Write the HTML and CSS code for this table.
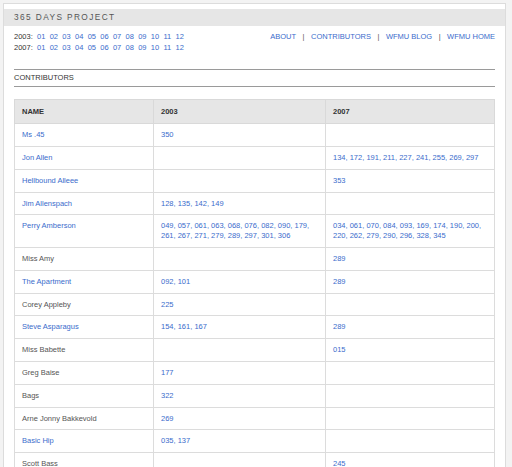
FILE: index.html
```html
<!DOCTYPE html>
<html>
<head>
<meta charset="utf-8">
<title>365 Days Project - Contributors</title>
<link rel="stylesheet" href="styles.css">
</head>
<body>
<div class="panel">
  <div class="titlebar">365 DAYS PROJECT</div>
  <div class="content">
    <div class="topnav">
      <div class="years">
        <div class="yearline">2003: <a href="#">01</a> <a href="#">02</a> <a href="#">03</a> <a href="#">04</a> <a href="#">05</a> <a href="#">06</a> <a href="#">07</a> <a href="#">08</a> <a href="#">09</a> <a href="#">10</a> <a href="#">11</a> <a href="#">12</a></div>
        <div class="yearline">2007: <a href="#">01</a> <a href="#">02</a> <a href="#">03</a> <a href="#">04</a> <a href="#">05</a> <a href="#">06</a> <a href="#">07</a> <a href="#">08</a> <a href="#">09</a> <a href="#">10</a> <a href="#">11</a> <a href="#">12</a></div>
      </div>
      <div class="menu"><a href="#">ABOUT</a><span class="sep">|</span><a href="#">CONTRIBUTORS</a><span class="sep">|</span><a href="#">WFMU BLOG</a><span class="sep">|</span><a href="#">WFMU HOME</a></div>
    </div>
    <div class="section">CONTRIBUTORS</div>
    <table class="contrib">
      <colgroup><col class="c1"><col class="c2"><col class="c3"></colgroup>
      <thead>
        <tr><th>NAME</th><th>2003</th><th>2007</th></tr>
      </thead>
      <tbody>
        <tr><td><a href="#">Ms .45</a></td><td class="nums"><a href="#">350</a></td><td class="nums"></td></tr>
        <tr><td><a href="#">Jon Allen</a></td><td class="nums"></td><td class="nums"><a href="#">134</a>, <a href="#">172</a>, <a href="#">191</a>, <a href="#">211</a>, <a href="#">227</a>, <a href="#">241</a>, <a href="#">255</a>, <a href="#">269</a>, <a href="#">297</a></td></tr>
        <tr><td><a href="#">Hellbound Alleee</a></td><td class="nums"></td><td class="nums"><a href="#">353</a></td></tr>
        <tr><td><a href="#">Jim Allenspach</a></td><td class="nums"><a href="#">128</a>, <a href="#">135</a>, <a href="#">142</a>, <a href="#">149</a></td><td class="nums"></td></tr>
        <tr><td><a href="#">Perry Amberson</a></td><td class="nums"><a href="#">049</a>, <a href="#">057</a>, <a href="#">061</a>, <a href="#">063</a>, <a href="#">068</a>, <a href="#">076</a>, <a href="#">082</a>, <a href="#">090</a>, <a href="#">179</a>, <a href="#">261</a>, <a href="#">267</a>, <a href="#">271</a>, <a href="#">279</a>, <a href="#">289</a>, <a href="#">297</a>, <a href="#">301</a>, <a href="#">306</a></td><td class="nums"><a href="#">034</a>, <a href="#">061</a>, <a href="#">070</a>, <a href="#">084</a>, <a href="#">093</a>, <a href="#">169</a>, <a href="#">174</a>, <a href="#">190</a>, <a href="#">200</a>, <a href="#">220</a>, <a href="#">262</a>, <a href="#">279</a>, <a href="#">290</a>, <a href="#">296</a>, <a href="#">328</a>, <a href="#">345</a></td></tr>
        <tr><td>Miss Amy</td><td class="nums"></td><td class="nums"><a href="#">289</a></td></tr>
        <tr><td><a href="#">The Apartment</a></td><td class="nums"><a href="#">092</a>, <a href="#">101</a></td><td class="nums"><a href="#">289</a></td></tr>
        <tr><td>Corey Appleby</td><td class="nums"><a href="#">225</a></td><td class="nums"></td></tr>
        <tr><td><a href="#">Steve Asparagus</a></td><td class="nums"><a href="#">154</a>, <a href="#">161</a>, <a href="#">167</a></td><td class="nums"><a href="#">289</a></td></tr>
        <tr><td>Miss Babette</td><td class="nums"></td><td class="nums"><a href="#">015</a></td></tr>
        <tr><td>Greg Baise</td><td class="nums"><a href="#">177</a></td><td class="nums"></td></tr>
        <tr><td>Bags</td><td class="nums"><a href="#">322</a></td><td class="nums"></td></tr>
        <tr><td>Arne Jonny Bakkevold</td><td class="nums"><a href="#">269</a></td><td class="nums"></td></tr>
        <tr><td><a href="#">Basic Hip</a></td><td class="nums"><a href="#">035</a>, <a href="#">137</a></td><td class="nums"></td></tr>
        <tr><td>Scott Bass</td><td class="nums"></td><td class="nums"><a href="#">245</a></td></tr>
      </tbody>
    </table>
  </div>
</div>
</body>
</html>
```

FILE: styles.css
```css
html, body {
  margin: 0;
  padding: 0;
}
body {
  background: #f3f3f3;
  font-family: "Liberation Sans", Arial, sans-serif;
  font-size: 7.5px;
  color: #333;
  padding: 3px 6px 0 3px;
}
a {
  color: #3a6ccc;
  text-decoration: none;
}
.panel {
  background: #fff;
  border: 1px solid #dcdcdc;
  border-bottom: none;
  padding-top: 5px;
  padding-bottom: 40px;
}
.titlebar {
  background: #e6e6e6;
  height: 17px;
  line-height: 17px;
  padding-left: 10px;
  font-size: 8.3px;
  letter-spacing: 1.4px;
  color: #555;
}
.content {
  padding: 0 10px;
}
.topnav {
  display: flex;
  justify-content: space-between;
  align-items: flex-start;
  margin-top: 5px;
}
.yearline {
  line-height: 11px;
  word-spacing: 2.2px;
  color: #333;
}
.menu {
  line-height: 11px;
}
.sep {
  margin: 0 6.5px;
  color: #555;
}
.section {
  margin-top: 16px;
  border-top: 1px solid #9a9a9a;
  border-bottom: 1px solid #9a9a9a;
  line-height: 16px;
  color: #333;
}
.contrib {
  margin-top: 11.5px;
  width: 100%;
  border-collapse: collapse;
  table-layout: fixed;
  border: 1px solid #d9d9d9;
}
.c1 { width: 139px; }
.c2 { width: 172px; }
.contrib th {
  background: #e6e6e6;
  text-align: left;
  font-weight: bold;
  color: #333;
  padding: 7px;
  line-height: 9.8px;
  border: 1px solid #d9d9d9;
}
.contrib td {
  padding: 6px 7px;
  line-height: 9.8px;
  border: 1px solid #dcdcdc;
  vertical-align: top;
  color: #555;
}
.contrib td.nums {
  color: #3a6ccc;
}
```
